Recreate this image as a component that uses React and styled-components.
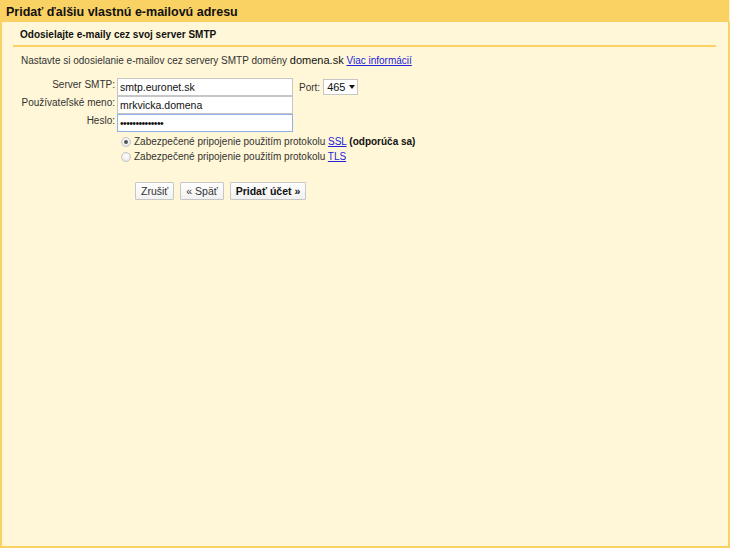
import React from 'react';
import styled, { createGlobalStyle } from 'styled-components';

const Global = createGlobalStyle`
  html, body {
    margin: 0;
    padding: 0;
    background: #fff7d7;
  }
  body {
    font-family: "Liberation Sans", Arial, sans-serif;
    color: #222;
  }
`;

function App() {
  return (
    <>
      <Global />
      <Frame>
        <TitleBar>Pridať ďalšiu vlastnú e-mailovú adresu</TitleBar>
        <Body>
          <Section>Odosielajte e-maily cez svoj server SMTP</Section>
          <Intro>
            Nastavte si odosielanie e-mailov cez servery SMTP domény <Domain>domena.sk</Domain>{' '}
            <Link href="#">Viac informácií</Link>
          </Intro>
          <Form>
            <Label>Server SMTP:</Label>
            <InputRow>
              <Input defaultValue="smtp.euronet.sk" />
              <PortLabel>Port:</PortLabel>
              <Select>
                465
                <svg width="6" height="4" viewBox="0 0 6 4">
                  <path d="M0 0h6L3 4z" fill="#111" />
                </svg>
              </Select>
            </InputRow>
            <Label>Používateľské meno:</Label>
            <InputRow>
              <Input defaultValue="mrkvicka.domena" />
            </InputRow>
            <Label>Heslo:</Label>
            <InputRow>
              <Input type="password" defaultValue="mrkvickaheslo1" focused />
            </InputRow>
          </Form>
          <Options>
            <Option>
              <Radio checked />
              <span>
                Zabezpečené pripojenie použitím protokolu <Link href="#">SSL</Link>{' '}
                <b>(odporúča sa)</b>
              </span>
            </Option>
            <Option>
              <Radio />
              <span>
                Zabezpečené pripojenie použitím protokolu <Link href="#">TLS</Link>
              </span>
            </Option>
          </Options>
          <Buttons>
            <Button>Zrušiť</Button>
            <Button>« Späť</Button>
            <Button primary>Pridať účet »</Button>
          </Buttons>
        </Body>
      </Frame>
    </>
  );
}

export default App;

const Frame = styled.div`
  box-sizing: border-box;
  width: 730px;
  height: 548px;
  border: 2px solid #fad163;
  border-top: none;
  background: #fff7d7;
  display: flex;
  flex-direction: column;
`;

const TitleBar = styled.div`
  background: #fad163;
  height: 22px;
  line-height: 24px;
  margin: 0 -2px;
  padding-left: 6px;
  font-size: 12.5px;
  font-weight: bold;
  color: #111;
  border-right: 1px solid #fff0c0;
`;

const Body = styled.div`
  padding: 0 12px 0 11px;
`;

const Section = styled.div`
  margin-top: 4px;
  padding: 0 0 0 7px;
  height: 19px;
  line-height: 17px;
  font-size: 10px;
  font-weight: bold;
  color: #111;
  border-bottom: 2px solid #fad163;
`;

const Intro = styled.div`
  margin-top: 6px;
  padding-left: 8px;
  font-size: 10px;
  color: #333;
  line-height: 15px;
`;

const Domain = styled.span`
  font-size: 11px;
  color: #111;
`;

const Link = styled.a`
  color: #2222dd;
  text-decoration: underline;
`;

const Form = styled.div`
  margin-top: 10px;
  display: grid;
  grid-template-columns: 102px auto;
  align-items: center;
`;

const Label = styled.div`
  text-align: right;
  font-size: 10px;
  color: #333;
  height: 18px;
  line-height: 13px;
`;

const InputRow = styled.div`
  display: flex;
  align-items: center;
  height: 18px;
  padding-left: 2px;
`;

const Input = styled.input.withConfig({ shouldForwardProp: p => p !== 'focused' })`
  box-sizing: border-box;
  width: 176px;
  height: 18px;
  margin: 0;
  padding: 0 2px;
  font-family: "Liberation Sans", Arial, sans-serif;
  font-size: 10.5px;
  color: #111;
  background: #fff;
  border: 1px solid ${p => (p.focused ? '#8fb0e8' : '#c6c6c6')};
  outline: none;
  letter-spacing: ${p => (p.type === 'password' ? '-0.6px' : '0')};
`;

const PortLabel = styled.span`
  font-size: 10px;
  color: #333;
  margin: 0 3px 0 6px;
`;

const Select = styled.div`
  box-sizing: border-box;
  height: 16px;
  width: 35px;
  border: 1px solid #c6c6c6;
  background: #fff;
  font-size: 11px;
  color: #111;
  display: flex;
  align-items: center;
  gap: 4px;
  padding-left: 3px;
`;

const Options = styled.div`
  margin-top: 2px;
  padding-left: 108px;
  display: flex;
  flex-direction: column;
`;

const Option = styled.div`
  display: flex;
  align-items: center;
  height: 15px;
  font-size: 10px;
  color: #333;
  white-space: pre;
  b {
    color: #111;
  }
`;

const Radio = styled.span`
  box-sizing: border-box;
  width: 10px;
  height: 10px;
  border-radius: 50%;
  border: 1px solid #c4c4c4;
  background: radial-gradient(circle at 50% 40%, #fff, #e2e2e2);
  margin: 0 3px 0 0;
  position: relative;
  flex: none;
  &::after {
    content: '';
    display: ${p => (p.checked ? 'block' : 'none')};
    position: absolute;
    left: 2px;
    top: 2px;
    width: 4px;
    height: 4px;
    border-radius: 50%;
    background: #555;
  }
`;

const Buttons = styled.div`
  display: flex;
  gap: 6px;
  margin-top: 18px;
  padding-left: 122px;
`;

const Button = styled.button`
  box-sizing: border-box;
  height: 18px;
  padding: 0 5px;
  font-family: "Liberation Sans", Arial, sans-serif;
  font-size: 10.5px;
  font-weight: ${p => (p.primary ? 'bold' : 'normal')};
  color: ${p => (p.primary ? '#111' : '#333')};
  background: linear-gradient(#ffffff, #f1f1f1);
  border: 1px solid #c6c6c6;
  border-radius: 1px;
`;
